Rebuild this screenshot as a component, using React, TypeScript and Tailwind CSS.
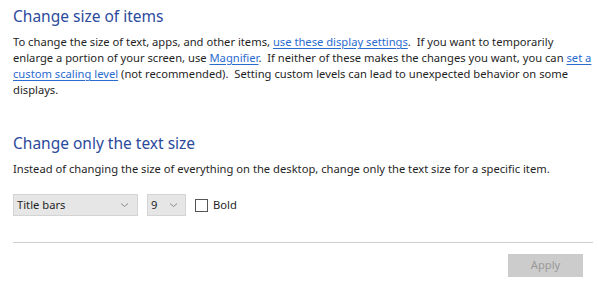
import React from 'react'

const font = { fontFamily: '"Noto Sans", "Open Sans", sans-serif' }

function Link({ children }: { children: React.ReactNode }) {
  return <span className="text-[#2a6bd0] underline underline-offset-2">{children}</span>
}

function Chevron() {
  return (
    <svg width="9" height="6" viewBox="0 0 9 6" className="shrink-0">
      <path d="M1 1.5 L4.5 4.5 L8 1.5" fill="none" stroke="#8a8a8a" strokeWidth="1" />
    </svg>
  )
}

export default function App() {
  return (
    <div className="h-[288px] w-[599px] overflow-hidden bg-white pl-[13px] pr-[6px] text-[#1f1f1f]" style={font}>
      <h1 className="pt-[5px] text-[15.5px] leading-[22px] text-[#2b4a9c]">Change size of items</h1>
      <p className="mt-[7px] whitespace-nowrap text-[11.2px] leading-[16px]">
        To change the size of text, apps, and other items, <Link>use these display settings</Link>.&nbsp; If you
        want to temporarily
        <br />
        enlarge a portion of your screen, use <Link>Magnifier</Link>.&nbsp; If neither of these makes the changes
        you want, you can <Link>set a</Link>
        <br />
        <Link>custom scaling level</Link> (not recommended).&nbsp; Setting custom levels can lead to unexpected
        behavior on some
        <br />
        displays.
      </p>

      <h2 className="mt-[34px] text-[15.5px] leading-[22px] text-[#2b4a9c]">Change only the text size</h2>
      <p className="mt-[7px] whitespace-nowrap text-[11.2px] leading-[16px]">
        Instead of changing the size of everything on the desktop, change only the text size for a specific item.
      </p>

      <div className="mt-[17px] flex items-center text-[11.2px]">
        <div className="flex h-[22px] w-[125px] items-center justify-between border border-[#d4d4d4] bg-[#e6e6e6] pl-[3px] pr-[8px]">
          <span>Title bars</span>
          <Chevron />
        </div>
        <div className="ml-[9px] flex h-[22px] w-[39px] items-center justify-between border border-[#d4d4d4] bg-[#e6e6e6] pl-[3px] pr-[7px]">
          <span>9</span>
          <Chevron />
        </div>
        <div className="ml-[9px] h-[13px] w-[13px] border border-[#555]" />
        <span className="ml-[5px]">Bold</span>
      </div>

      <div className="mt-[26px] h-px w-[580px] bg-[#cfcfcf]" />

      <div className="mt-[11px] flex w-[570px] justify-end">
        <button className="h-[23px] w-[75px] bg-[#cccccc] text-[11.2px] text-[#9a9a9a]">Apply</button>
      </div>
    </div>
  )
}
